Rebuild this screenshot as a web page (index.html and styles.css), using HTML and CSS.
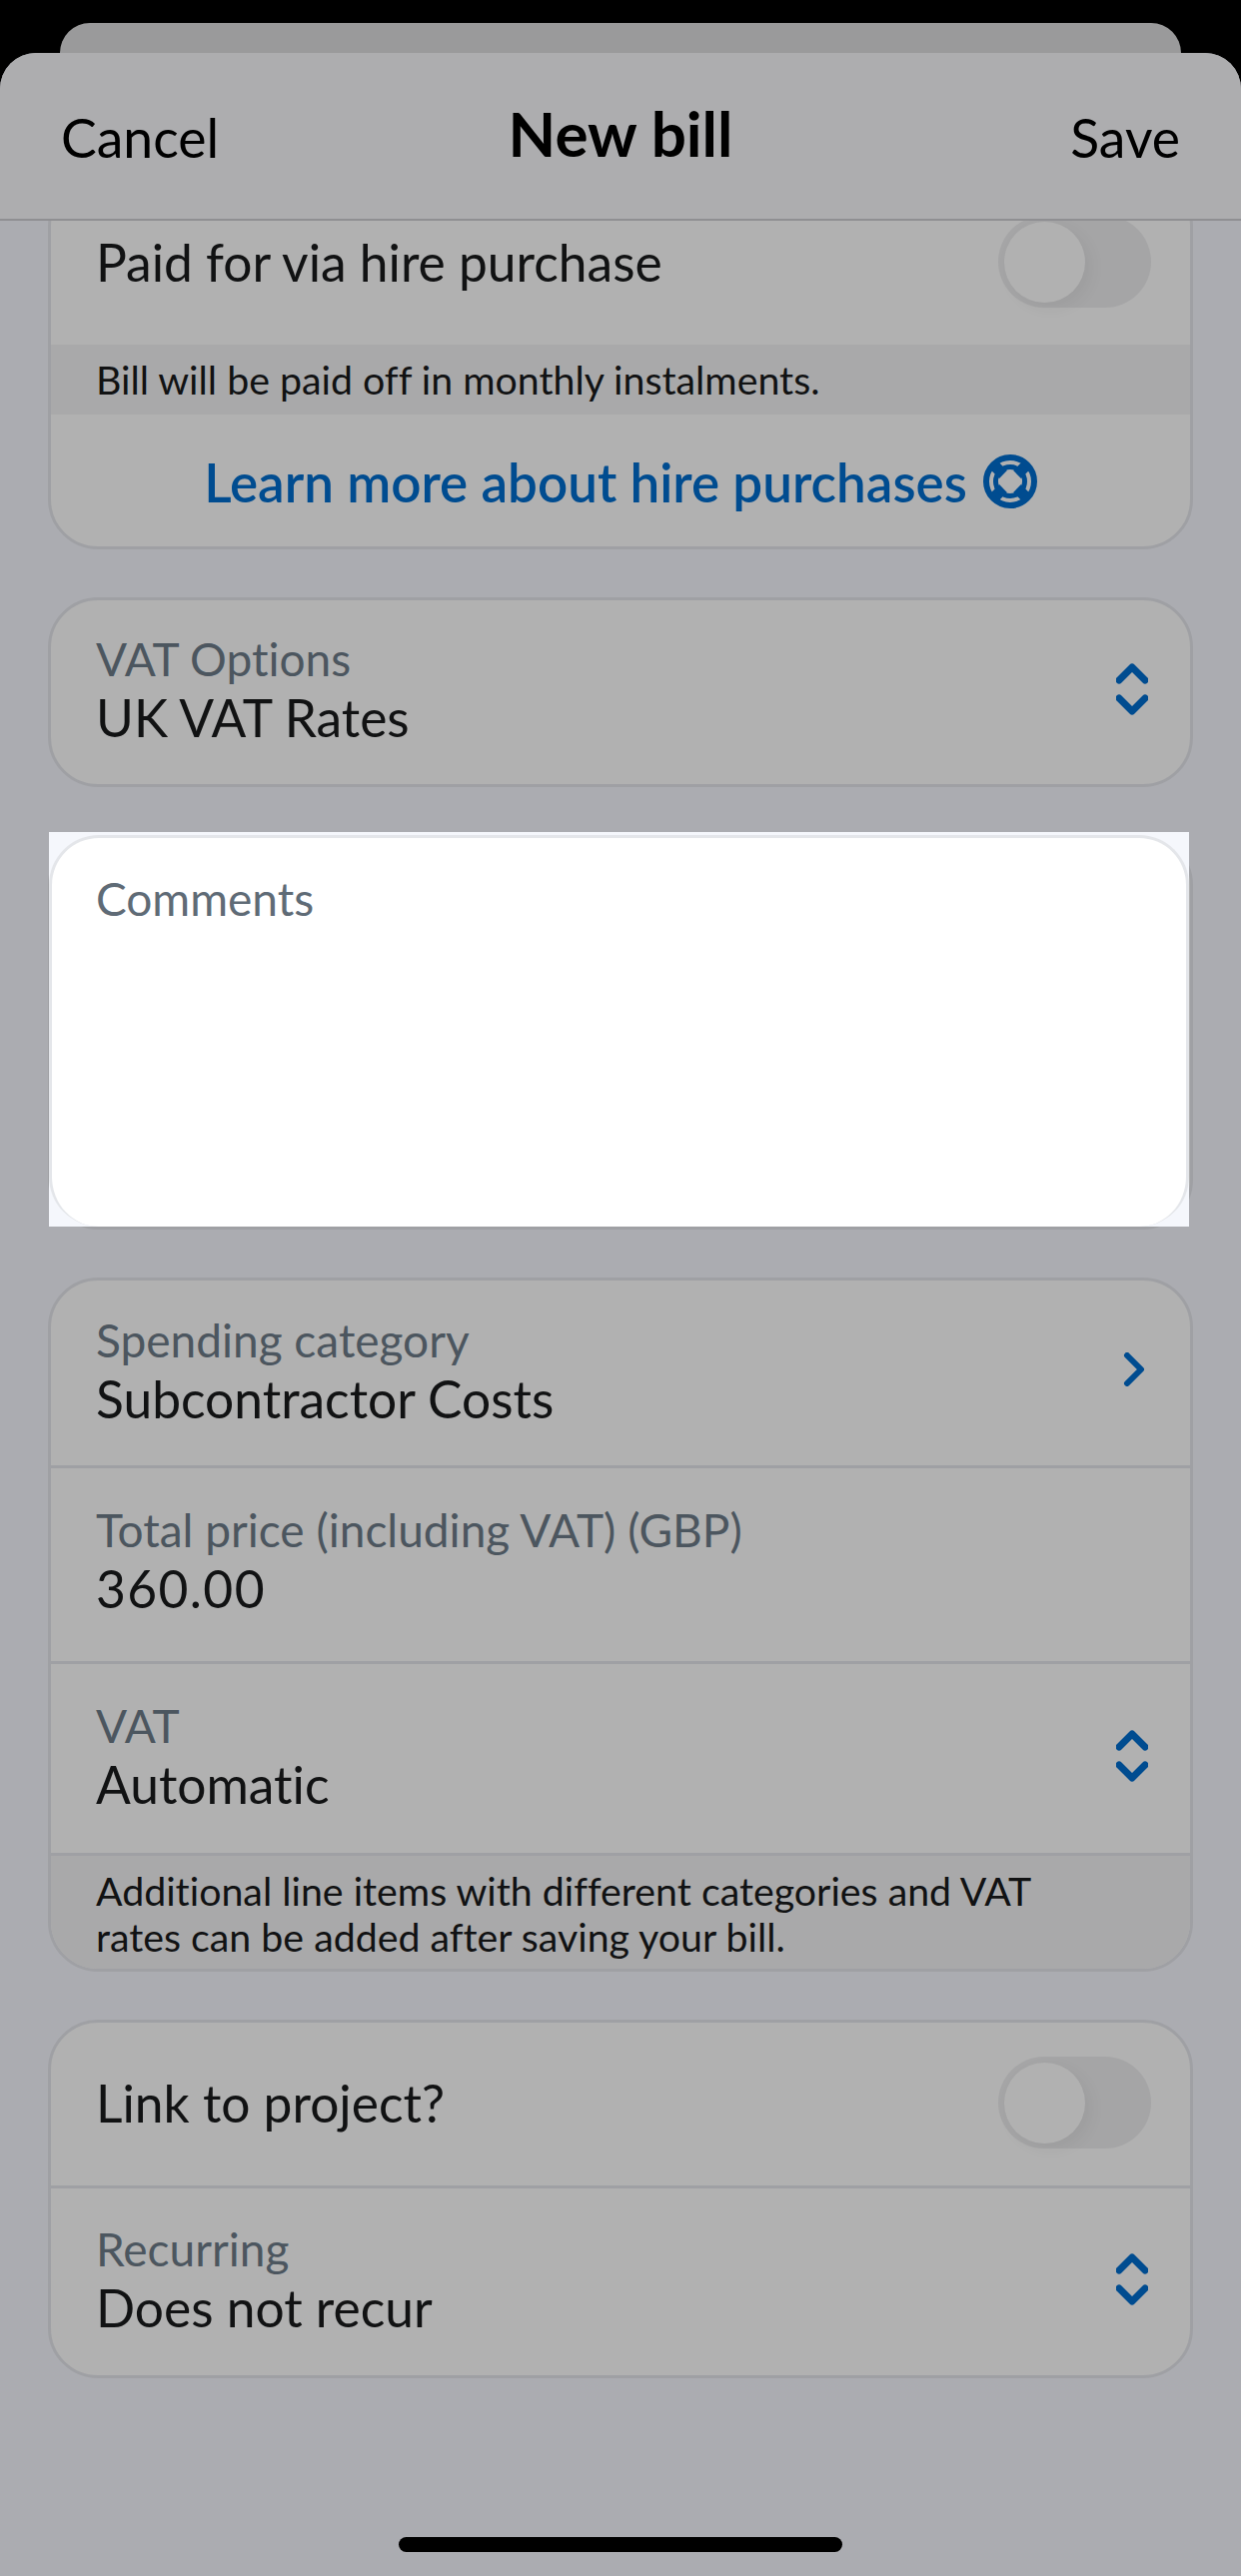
FILE: index.html
```html
<!DOCTYPE html>
<html lang="en">
<head>
  <meta charset="utf-8">
  <meta name="viewport" content="width=device-width, initial-scale=1">
  <title>New bill</title>
  <link rel="stylesheet" href="styles.css">
</head>
<body>
  <div class="sheet-back"></div>
  <div class="sheet">
    <!-- Nav bar -->
    <header class="nav">
      <span class="nav-btn">Cancel</span>
      <h1>New bill</h1>
      <span class="nav-btn nav-save">Save</span>
    </header>

    <main class="form">
      <!-- Hire purchase (scrolled under the nav bar) -->
      <section class="card card-scrolled">
        <div class="row row-switch">
          <span class="value">Paid for via hire purchase</span>
          <span class="switch"><span class="knob"></span></span>
        </div>
        <p class="note note-single">Bill will be paid off in monthly instalments.</p>
        <div class="row-link">
          <span class="link-text">Learn more about hire purchases</span>
          <svg class="icon-help" viewBox="0 0 54 54" aria-hidden="true">
            <path class="spokes" d="M9 9L20 20M45 9L34 20M9 45L20 34M45 45L34 34"/>
            <circle class="ring" cx="27" cy="27" r="24"/>
            <circle class="ring ring-inner" cx="27" cy="27" r="14.5"/>
          </svg>
        </div>
      </section>

      <!-- VAT options -->
      <section class="card">
        <div class="row row-field">
          <div class="field">
            <span class="label">VAT Options</span>
            <span class="value">UK VAT Rates</span>
          </div>
          <svg class="icon-updown" viewBox="0 0 32 52" aria-hidden="true"><path d="M3 17L16 4L29 17M3 35L16 48L29 35"/></svg>
        </div>
      </section>

      <!-- Comments, highlighted -->
      <section class="card card-comments">
        <div class="highlight">
          <div class="comments-box"><span class="label label-light">Comments</span></div>
        </div>
      </section>

      <!-- Line item -->
      <section class="card">
        <div class="row row-field row-category">
          <div class="field">
            <span class="label">Spending category</span>
            <span class="value">Subcontractor Costs</span>
          </div>
          <svg class="icon-right" viewBox="0 0 22 34" aria-hidden="true"><path d="M4 3L18 17L4 31"/></svg>
        </div>
        <div class="row row-field row-price">
          <div class="field">
            <span class="label">Total price (including VAT) (GBP)</span>
            <span class="value value-amount">360.00</span>
          </div>
        </div>
        <div class="row row-field row-vat">
          <div class="field">
            <span class="label">VAT</span>
            <span class="value">Automatic</span>
          </div>
          <svg class="icon-updown" viewBox="0 0 32 52" aria-hidden="true"><path d="M3 17L16 4L29 17M3 35L16 48L29 35"/></svg>
        </div>
        <p class="note note-double">Additional line items with different categories and VAT rates can be added after saving your bill.</p>
      </section>

      <!-- Project and recurrence -->
      <section class="card">
        <div class="row row-switch row-divided">
          <span class="value">Link to project?</span>
          <span class="switch"><span class="knob"></span></span>
        </div>
        <div class="row row-field row-recurring">
          <div class="field">
            <span class="label">Recurring</span>
            <span class="value">Does not recur</span>
          </div>
          <svg class="icon-updown" viewBox="0 0 32 52" aria-hidden="true"><path d="M3 17L16 4L29 17M3 35L16 48L29 35"/></svg>
        </div>
      </section>
    </main>

    <footer class="home"><span class="home-bar"></span></footer>
  </div>
</body>
</html>
```

FILE: styles.css
```css
:root {
  --color-bg: #abacb1;
  --color-nav: #adadaf;
  --color-card: #b1b1b1;
  --color-note: #a9a9aa;
  --color-line: #9fa0a4;
  --color-blue: #004c90;
  --color-text: #111213;
  --color-label: #4c565f;
  --font-body: 'Lato', 'Liberation Sans', sans-serif;
}
*, *::before, *::after { box-sizing: border-box; }
html, body { margin: 0; height: 2579px; overflow: hidden; }
body { background: #000; font-family: var(--font-body); font-variant-ligatures: none; color: var(--color-text); padding-top: 23px; }

.sheet-back { height: 30px; margin: 0 60px; background: #9a9a9b; border-radius: 30px 30px 0 0; }
.sheet { display: flex; flex-direction: column; height: 2526px; background: var(--color-bg); border-radius: 36px 36px 0 0; overflow: hidden; }

.nav { position: relative; z-index: 2; flex: none; display: grid; grid-template-columns: 1fr auto 1fr; height: 168px; padding: 45px 61px 0; background: var(--color-nav); border-bottom: 2px solid #8f8f92; }
.nav h1 { margin: 0; font-size: 62px; line-height: 70px; font-weight: 700; color: #000; }
.nav-btn { font-size: 53.5px; line-height: 70px; padding-top: 4px; color: #000; }
.nav-save { text-align: right; }

.form { display: flex; flex-direction: column; gap: 48px; padding: 0 48px; }
.card { border: 3px solid var(--color-line); border-radius: 50px; background: var(--color-card); overflow: hidden; }
.card-scrolled { margin-top: -45px; }

.row { display: flex; align-items: center; justify-content: space-between; padding: 0 39px 0 45px; }
.row-switch { height: 166px; }
.row-field { height: 184px; padding-bottom: 6px; }
.row-category { height: 188px; border-bottom: 3px solid var(--color-line); }
.row-price { height: 196px; padding-bottom: 9px; border-bottom: 3px solid var(--color-line); }
.row-vat { height: 192px; border-bottom: 3px solid var(--color-line); }
.row-divided { padding-bottom: 4px; border-bottom: 3px solid var(--color-line); }
.row-recurring { height: 187px; }

.field { display: flex; flex-direction: column; }
.label { font-size: 46px; line-height: 56px; color: var(--color-label); }
.label-light { color: #5f6b76; }
.value { font-size: 51.5px; line-height: 60px; color: var(--color-text); }
.value-amount { letter-spacing: 1.4px; }

.note { margin: 0; background: var(--color-note); font-size: 39.3px; line-height: 46px; padding: 0 70px 0 45px; }
.note-single { height: 70px; padding-top: 12px; }
.note-double { height: 113px; padding-top: 12px; }

.row-link { display: flex; align-items: center; justify-content: center; gap: 16px; height: 132px; padding-top: 2px; }
.link-text { font-size: 53px; font-weight: 600; color: var(--color-blue); }
.icon-help { width: 54px; height: 54px; }
.icon-help .ring { fill: none; stroke: var(--color-blue); stroke-width: 6; }
.icon-help .ring-inner { stroke-width: 5; }
.icon-help .spokes { fill: none; stroke: var(--color-blue); stroke-width: 11; }

.icon-updown { width: 32px; height: 52px; margin-right: 3px; fill: none; stroke: var(--color-blue); stroke-width: 7; stroke-linecap: round; stroke-linejoin: round; }
.icon-right { width: 22px; height: 34px; margin-right: 6px; margin-bottom: 2px; fill: none; stroke: var(--color-blue); stroke-width: 6; stroke-linecap: round; stroke-linejoin: round; }

.switch { display: block; width: 153px; height: 92px; padding: 6px; border-radius: 46px; background: #a5a5a6; }
.knob { display: block; width: 81px; height: 81px; border-radius: 50%; background: var(--color-card); box-shadow: 6px 5px 16px rgba(0, 0, 0, .05); }

/* the focused comments field sits above the dimmed sheet */
.card-comments { position: relative; height: 395px; overflow: visible; }
.highlight { position: absolute; top: -6px; left: -2px; right: 1px; bottom: 0; padding-top: 3px; background: #f5f7fc; }
.comments-box { height: 100%; padding: 33px 44px; background: #fff; border: 3px solid #e4e6ea; border-bottom: 0; border-radius: 50px; }

.home { margin-top: auto; display: flex; justify-content: center; padding-bottom: 24px; }
.home-bar { width: 444px; height: 15px; border-radius: 8px; background: #000; }
```
